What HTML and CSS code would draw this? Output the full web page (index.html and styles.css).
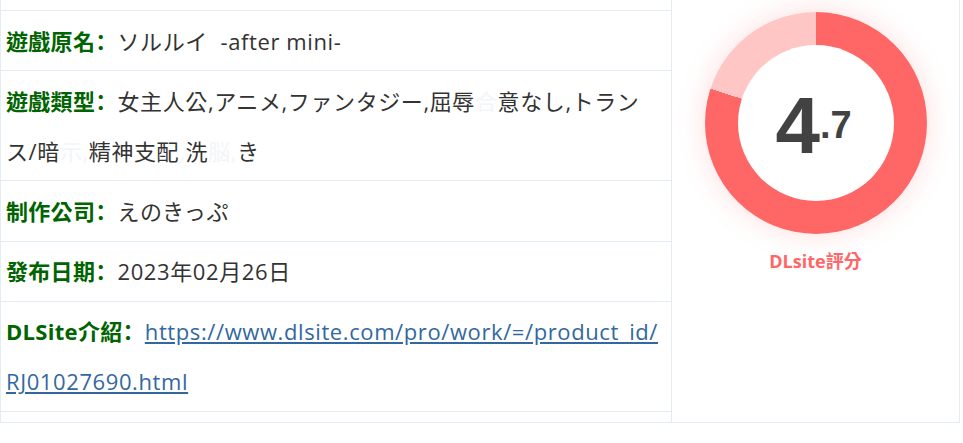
FILE: index.html
```html
<!DOCTYPE html>
<html lang="zh-Hant">
<head>
<meta charset="utf-8">
<title>DLsite</title>
<link rel="stylesheet" href="styles.css">
</head>
<body>
<div class="card">
  <div class="info">
    <div class="row"><b class="label">遊戲原名：</b>ソルルイ&nbsp; -after mini-</div>
    <div class="row"><b class="label">遊戲類型：</b>女主人公,アニメ,ファンタジー,屈辱<span class="mask">合</span>意なし,トランス/暗<span class="mask">示,</span>精神支配<span class="mask">,</span>洗<span class="mask">脳,</span>き</div>
    <div class="row"><b class="label">制作公司：</b>えのきっぷ</div>
    <div class="row"><b class="label">發布日期：</b>2023年02月26日</div>
    <div class="row"><b class="label">DLSite介紹：</b><a class="link" href="#">https://www.dlsite.com/pro/work/=/product_id/<wbr>RJ01027690.html</a></div>
  </div>
  <div class="score">
    <div class="donut">
      <div class="donut-inner">
        <span class="num">4<span class="dec">.7</span></span>
      </div>
    </div>
    <div class="score-label">DLsite評分</div>
  </div>
</div>
</body>
</html>
```

FILE: styles.css
```css
html, body {
  margin: 0;
  padding: 0;
  background: #ffffff;
}

.card {
  display: flex;
  width: 958px;
  border: 1px solid #e3ebf4;
  border-top: none;
  font-family: "Open Sans", "Noto Sans CJK JP", sans-serif;
  font-size: 22px;
  color: #333333;
}

.info {
  width: 670px;
  padding-top: 10px;
  margin-bottom: 10px;
}

.row {
  border-top: 1px solid #e3ebf4;
  padding: 4.6px 5px;
  line-height: 50px;
  letter-spacing: 0.6px;
  overflow-wrap: anywhere;
}

.row:last-child {
  border-bottom: 1px solid #e3ebf4;
}

.label {
  color: #006400;
  font-weight: 700;
  font-family: "Open Sans", "Noto Sans CJK SC", sans-serif;
  letter-spacing: 0.3px;
  font-feature-settings: "halt";
  padding-right: 11px;
}

.mask {
  color: #f3f5f9;
}

.link {
  color: #33689f;
  text-decoration: underline;
}

.score {
  flex: 1;
  border-left: 1px solid #e3ebf4;
  display: flex;
  flex-direction: column;
  align-items: center;
  padding-top: 12px;
}

.donut {
  width: 222px;
  height: 222px;
  border-radius: 50%;
  background: conic-gradient(#ff6666 0 80%, #ffc6c6 80% 100%);
  box-shadow: 0 0 28px rgba(255, 102, 102, 0.22);
  display: flex;
  align-items: center;
  justify-content: center;
}

.donut-inner {
  width: 156px;
  height: 156px;
  border-radius: 50%;
  background: #ffffff;
  display: flex;
  align-items: center;
  justify-content: center;
}

.num {
  font-family: "Liberation Sans", Arial, sans-serif;
  font-weight: 700;
  font-size: 80px;
  line-height: 80px;
  color: #424242;
  padding-top: 4px;
  margin-left: -4px;
}

.dec {
  font-size: 38px;
  vertical-align: 15px;
}

.score-label {
  margin-top: 13px;
  font-family: "Open Sans", "Noto Sans CJK TC", sans-serif;
  font-weight: 700;
  font-size: 18px;
  color: #ff6666;
}
```
